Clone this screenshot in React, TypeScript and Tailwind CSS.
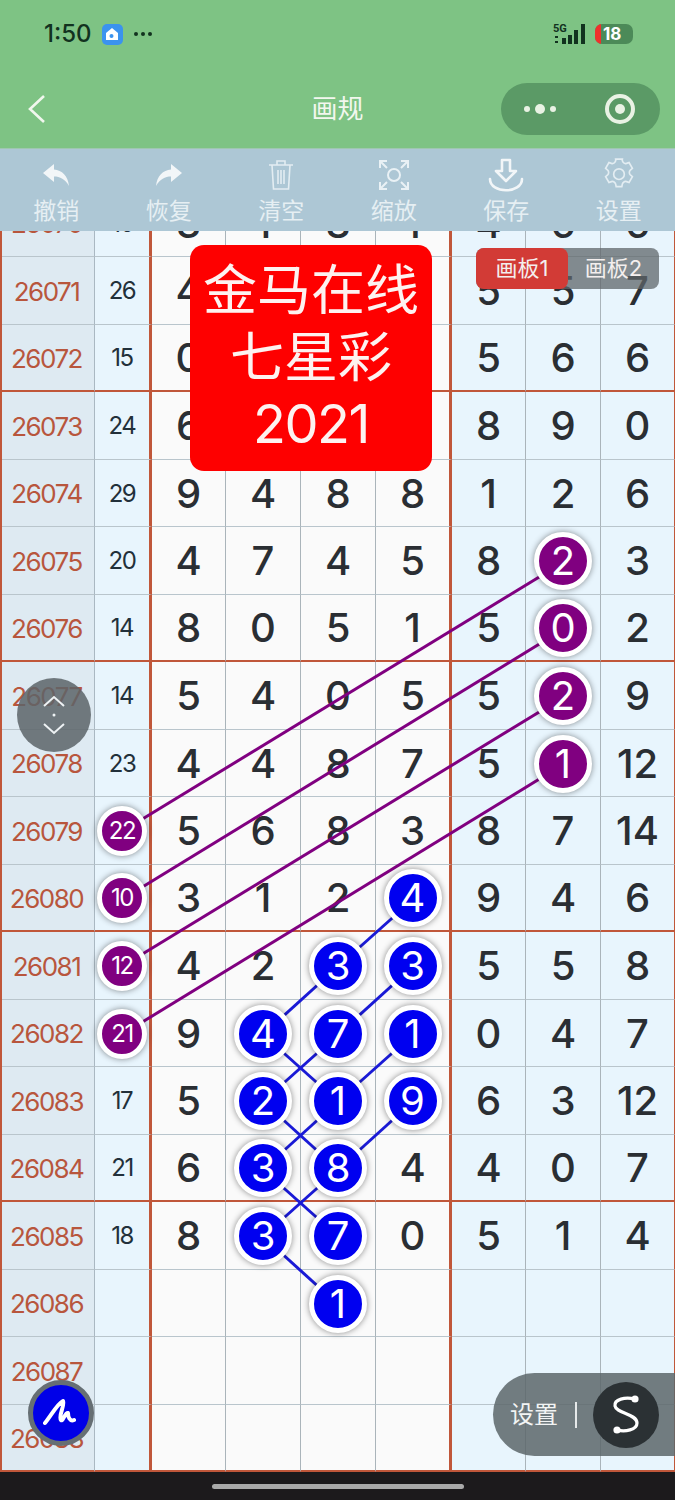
import React from "react";

// p = purple ball, b = blue ball
const rows: [string, string, string[]][] = [
  ["26070", "16", ["3", "1", "8", "1", "4", "6", "6"]],
  ["26071", "26", ["4", "", "", "", "5", "5", "7"]],
  ["26072", "15", ["0", "", "", "", "5", "6", "6"]],
  ["26073", "24", ["6", "", "", "", "8", "9", "0"]],
  ["26074", "29", ["9", "4", "8", "8", "1", "2", "6"]],
  ["26075", "20", ["4", "7", "4", "5", "8", "p2", "3"]],
  ["26076", "14", ["8", "0", "5", "1", "5", "p0", "2"]],
  ["26077", "14", ["5", "4", "0", "5", "5", "p2", "9"]],
  ["26078", "23", ["4", "4", "8", "7", "5", "p1", "12"]],
  ["26079", "p22", ["5", "6", "8", "3", "8", "7", "14"]],
  ["26080", "p10", ["3", "1", "2", "b4", "9", "4", "6"]],
  ["26081", "p12", ["4", "2", "b3", "b3", "5", "5", "8"]],
  ["26082", "p21", ["9", "b4", "b7", "b1", "0", "4", "7"]],
  ["26083", "17", ["5", "b2", "b1", "b9", "6", "3", "12"]],
  ["26084", "21", ["6", "b3", "b8", "4", "4", "0", "7"]],
  ["26085", "18", ["8", "b3", "b7", "0", "5", "1", "4"]],
  ["26086", "", ["", "", "b1", "", "", "", ""]],
  ["26087", "", ["", "", "", "", "", "", ""]],
  ["26088", "", ["", "", "", "", "", "", ""]],
];

const purpleLines = [
  [122, 831, 563, 562],
  [122, 899, 563, 629],
  [122, 966, 563, 697],
  [122, 1034, 563, 764],
];

const blueLines = [
  [413, 899, 338, 966],
  [338, 966, 263, 1034],
  [263, 1034, 338, 1101],
  [413, 966, 338, 1034],
  [338, 1034, 263, 1101],
  [263, 1101, 338, 1169],
  [413, 1034, 338, 1101],
  [338, 1101, 263, 1169],
  [263, 1169, 338, 1236],
  [413, 1101, 338, 1169],
  [338, 1169, 263, 1236],
  [263, 1236, 338, 1304],
];

const Ball = ({ value, small }: { value: string; small?: boolean }) => {
  const purple = value[0] === "p";
  return (
    <div
      className={`relative z-10 flex shrink-0 items-center justify-center rounded-full border-[5px] border-white font-normal text-white shadow-[0_0_6px_rgba(0,0,0,0.45)] ${
        purple ? "bg-[#800080]" : "bg-[#0000f0]"
      } ${small ? "h-[50px] w-[50px] text-[24px] tracking-[-1.5px]" : "h-[58px] w-[58px] text-[40px]"}`}
    >
      {value.slice(1)}
    </div>
  );
};

const Tool = ({ label, children }: { label: string; children: React.ReactNode }) => (
  <div className="flex w-[113px] flex-col items-center">
    <div className="flex h-[36px] items-center justify-center">{children}</div>
    <div className="mt-[5px] text-[23px] leading-[26px] text-[#e6eff3]">{label}</div>
  </div>
);

const Header = () => (
  <div className="relative z-30 h-[148px] shrink-0 bg-[#7ec384]">
    <div className="flex h-[66px] items-center pl-[44px] pr-[42px] pt-[2px]">
      <span className="text-[24px] font-medium text-[#12321f]">1:50</span>
      <div className="ml-[10px] flex h-[21px] w-[21px] items-center justify-center rounded-[5px] bg-[#3b93ee]">
        <svg width="14" height="14" viewBox="0 0 14 14" fill="white">
          <path d="M7 1 L13 6 V13 H1 V6 Z" />
          <circle cx="6.5" cy="9" r="2" fill="#3b93ee" />
        </svg>
      </div>
      <span className="ml-[11px] flex gap-[3px]">
        <i className="h-[4px] w-[4px] rounded-full bg-[#12321f]" />
        <i className="h-[4px] w-[4px] rounded-full bg-[#12321f]" />
        <i className="h-[4px] w-[4px] rounded-full bg-[#12321f]" />
      </span>
      <div className="ml-auto flex items-center">
        <svg width="34" height="22" viewBox="0 0 34 22" fill="#12321f">
          <text x="0" y="9" fontSize="11" fontWeight="700" fontFamily="Roboto, sans-serif">5G</text>
          <rect x="2" y="13" width="3" height="2" />
          <rect x="2" y="18" width="3" height="2" />
          <rect x="9" y="15" width="4" height="6" />
          <rect x="15" y="12" width="4" height="9" />
          <rect x="21" y="7" width="4" height="14" />
          <rect x="28" y="1" width="4" height="20" />
        </svg>
        <div className="ml-[8px] flex h-[20px] w-[38px] items-center overflow-hidden rounded-[7px] bg-[#4c8a58]">
          <div className="h-full w-[6px] bg-[#f0302c]" />
          <span className="ml-[2px] text-[17px] font-bold leading-none text-white">18</span>
        </div>
      </div>
    </div>
    <div className="mt-[16px] flex h-[52px] items-center pl-[26px] pr-[15px] pt-[1px]">
      <svg width="22" height="30" viewBox="0 0 22 30" fill="none" stroke="#f1f7ee" strokeWidth="2.6">
        <path d="M18 2 L4 15 L18 28" />
      </svg>
      <div className="flex-1 pl-[126px] text-center text-[26px] text-[#f2f7ee]">画规</div>
      <div className="flex h-[52px] w-[159px] items-center rounded-full bg-[#5b9a66]">
        <div className="ml-[23px] flex items-center gap-[5px]">
          <i className="h-[6px] w-[6px] rounded-full bg-[#e9f2e4]" />
          <i className="h-[10px] w-[10px] rounded-full bg-[#e9f2e4]" />
          <i className="h-[6px] w-[6px] rounded-full bg-[#e9f2e4]" />
        </div>
        <div className="ml-[49px] flex h-[30px] w-[30px] items-center justify-center rounded-full border-[4px] border-[#e9f2e4]">
          <i className="h-[10px] w-[10px] rounded-full bg-[#e9f2e4]" />
        </div>
      </div>
    </div>
  </div>
);

const Toolbar = () => (
  <div className="relative z-30 flex h-[83px] shrink-0 border-t border-[#9fc7b0] bg-[#adc7d5] pt-[8px]">
    <Tool label="撤销">
      <svg width="28" height="24" viewBox="0 0 28 24" fill="#f2f6f8">
        <path d="M12 1 L1 10 L12 19 V13.5 C18 13.5 23 16 27 23 C26 13 20 7 12 6.5 Z" />
      </svg>
    </Tool>
    <Tool label="恢复">
      <svg width="28" height="24" viewBox="0 0 28 24" fill="#f2f6f8">
        <path d="M16 1 L27 10 L16 19 V13.5 C10 13.5 5 16 1 23 C2 13 8 7 16 6.5 Z" />
      </svg>
    </Tool>
    <Tool label="清空">
      <svg width="26" height="32" viewBox="0 0 26 32" fill="none" stroke="#e3edf2" strokeWidth="1.6">
        <path d="M1 6 H25 M9 6 V2 H17 V6 M4 6 L5.5 30 H20.5 L22 6 M10 11 V25 M13 11 V25 M16 11 V25" />
      </svg>
    </Tool>
    <Tool label="缩放">
      <svg width="30" height="30" viewBox="0 0 30 30" fill="none" stroke="#e9f1f5" strokeWidth="2">
        <path d="M1 8 V1 H8 M22 1 H29 V8 M1 22 V29 H8 M22 29 H29 V22 M2 2 L8 8 M28 2 L22 8 M2 28 L8 22 M28 28 L22 22" />
        <circle cx="15" cy="15" r="6" />
      </svg>
    </Tool>
    <Tool label="保存">
      <svg width="36" height="35" viewBox="0 0 36 35" fill="none" stroke="#f2f6f8" strokeWidth="2.6" strokeLinejoin="round" strokeLinecap="round">
        <path d="M14 2 H22 V13 H28 L18 23 L8 13 H14 Z" />
        <path d="M2 21 C2 36 34 36 34 21" />
      </svg>
    </Tool>
    <Tool label="设置">
      <svg width="40" height="40" viewBox="0 0 24 24" fill="none" stroke="#e3edf2" strokeWidth="1">
        <path d="M9.67 4.14 A2 2 0 0 0 10 2.5 h4 a2 2 0 0 0 .33 1.64 2 2 0 0 0 2.2.9 l1.5-.5 2 3.46 -1.2 1.05 a2 2 0 0 0 0 2.9 l1.2 1.05 -2 3.46 -1.5-.5 a2 2 0 0 0-2.53 1.54 l-.3 1.5 h-3.4 l-.3-1.5 a2 2 0 0 0-2.53-1.54 l-1.5.5 -2-3.46 1.2-1.05 a2 2 0 0 0 0-2.9 l-1.2-1.05 2-3.46 1.5.5 a2 2 0 0 0 2.2-.9 Z" />
        <circle cx="12" cy="11.5" r="3.2" />
      </svg>
    </Tool>
  </div>
);

const Table = () => (
  <div className="relative z-0 mt-[-41.5px] shrink-0 border-l-2 border-[#c0573a]">
    <div className="grid grid-cols-[93px_57px_74px_75px_75px_76px_74px_75px_74px]">
      {rows.map((row, i) => {
        const heavy = i % 4 === 2;
        const line = heavy ? "border-b-2 border-b-[#c0573a]" : "border-b border-b-[#b9c5cc]";
        return (
          <React.Fragment key={row[0]}>
            <div className={`flex h-[67.5px] items-center justify-center border-r border-r-[#aab8c2] bg-[#deeaf2] pr-[3px] pt-[2px] text-[26px] tracking-[-1.5px] text-[#b8563d] ${line}`}>
              {row[0]}
            </div>
            <div className={`flex h-[67.5px] items-center justify-center border-r-[3px] border-r-[#c0573a] bg-[#e8f5fd] pt-[2px] text-[24px] tracking-[-1.5px] text-[#22303a] ${line}`}>
              {row[1][0] === "p" ? <Ball value={row[1]} small /> : row[1]}
            </div>
            {row[2].map((v, j) => {
              const ball = v[0] === "p" || v[0] === "b";
              return (
                <div
                  key={j}
                  className={`flex h-[67.5px] items-center justify-center pt-[2px] text-[40px] font-medium text-[#2a2e33] ${line} ${
                    j < 4 ? "bg-[#fafafa]" : "bg-[#e8f5fd]"
                  } ${j === 3 ? "border-r-[3px] border-r-[#c0573a]" : j === 6 ? "border-r border-r-[#c0573a]" : "border-r border-r-[#aab4ba]"}`}
                >
                  {ball ? <Ball value={v} /> : v}
                </div>
              );
            })}
          </React.Fragment>
        );
      })}
    </div>
    <svg className="absolute left-[-2px] top-0" width="675" height="1282.5" viewBox="0 189.5 675 1282.5" fill="none">
      {purpleLines.map((l, i) => (
        <line key={i} x1={l[0]} y1={l[1]} x2={l[2]} y2={l[3]} stroke="#800080" strokeWidth="3" />
      ))}
      {blueLines.map((l, i) => (
        <line key={i} x1={l[0]} y1={l[1]} x2={l[2]} y2={l[3]} stroke="#1a1ad6" strokeWidth="3" />
      ))}
    </svg>
  </div>
);

export default function App() {
  return (
    <div className="relative flex h-[1500px] w-[675px] flex-col overflow-hidden bg-[#1c1a1c] font-['Inter','Noto_Sans_CJK_SC',sans-serif]">
      <Header />
      <Toolbar />
      <Table />

      {/* bottom gesture bar */}
      <div className="flex flex-1 items-center justify-center bg-[#1c1a1c]">
        <div className="h-[5px] w-[252px] rounded-full bg-[#a9a9a9]" />
      </div>

      {/* watermark card */}
      <div className="absolute left-[190px] top-[245px] z-20 flex h-[226px] w-[242px] flex-col items-center justify-center rounded-[14px] bg-[#fe0000] text-[54px] leading-[66.5px] text-[#fdf2f0]">
        <div>金马在线</div>
        <div>七星彩</div>
        <div className="tracking-[-1.5px]">2021</div>
      </div>

      {/* board tabs */}
      <div className="absolute left-[476px] top-[248px] z-20 flex h-[41px] w-[183px] rounded-[8px] bg-[#5f666a]/75 text-[22px] text-[#f4efee]">
        <div className="flex w-[92px] items-center justify-center rounded-[8px] bg-[#d23b36]">画板1</div>
        <div className="flex w-[91px] items-center justify-center">画板2</div>
      </div>

      {/* page scroller */}
      <div className="absolute left-[17px] top-[678px] z-20 flex h-[74px] w-[74px] flex-col items-center justify-center rounded-full bg-[#5c6468]/85">
        <svg width="24" height="40" viewBox="0 0 24 40" fill="none" stroke="#eef2f4" strokeWidth="2">
          <path d="M2 11 L12 2 L22 11 M2 29 L12 38 L22 29" />
          <circle cx="12" cy="20" r="1.5" fill="#eef2f4" stroke="none" />
        </svg>
      </div>

      {/* pen */}
      <div className="absolute left-[28px] top-[1380px] z-20 flex h-[66px] w-[66px] items-center justify-center rounded-full border-[5px] border-[#666f74] bg-[#0000e8]">
        <svg width="36" height="30" viewBox="0 0 36 30" fill="none" stroke="white" strokeWidth="4" strokeLinecap="round" strokeLinejoin="round">
          <path d="M2 25 C8 18 14 6 20 3 C22 8 15 18 18 22 C20 24 22 14 25 15 C25 19 27 24 31 22" />
        </svg>
      </div>

      {/* settings pill */}
      <div className="absolute left-[493px] top-[1373px] z-20 flex h-[83px] w-[182px] items-center rounded-l-[42px] bg-[#5c666a]/85 pl-[17px]">
        <span className="text-[24px] text-[#f2f4f4]">设置</span>
        <i className="ml-[17px] h-[26px] w-[2px] bg-[#e6e9ea]" />
        <div className="ml-[16px] flex h-[66px] w-[66px] items-center justify-center rounded-full bg-[#2b3134]">
          <svg width="30" height="44" viewBox="0 0 30 44" fill="none" stroke="white" strokeWidth="3.2">
            <path d="M24 6 C14 4 3 6 4 13 C5 20 26 21 26 30 C26 37 14 39 6 37" />
            <circle cx="24" cy="6" r="3.6" fill="white" stroke="none" />
            <circle cx="6" cy="37" r="3.6" fill="white" stroke="none" />
          </svg>
        </div>
      </div>
    </div>
  );
}
